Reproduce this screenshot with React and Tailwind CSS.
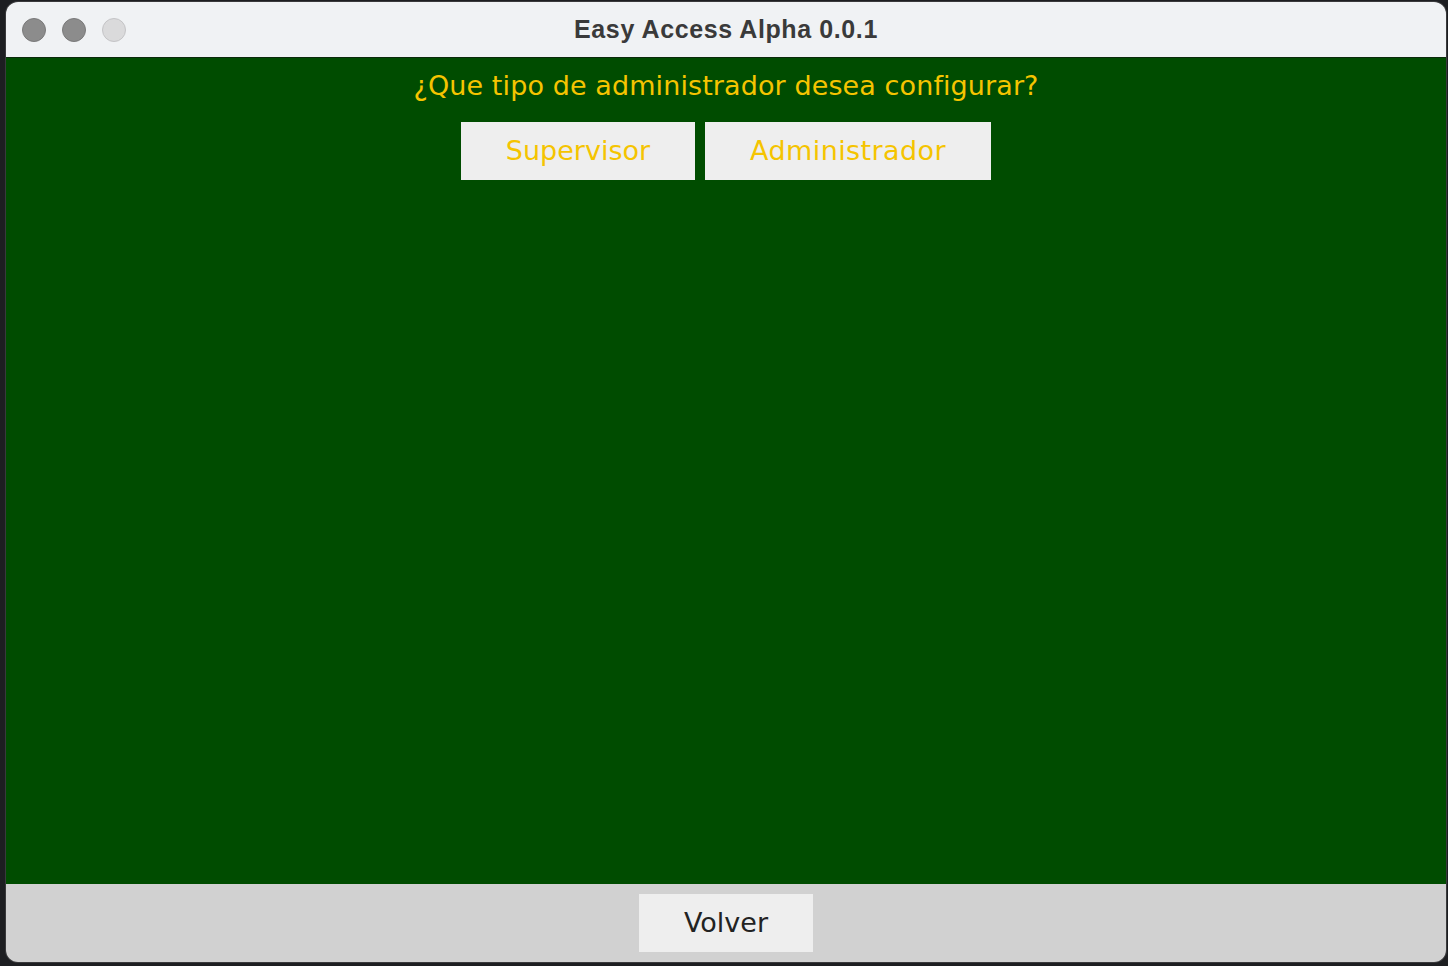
export default function App() {
  return (
    <div className="w-[1448px] h-[966px] bg-[#1d1e21] pt-[2px] pl-[6px] pr-[2px] pb-[4px] overflow-hidden">
      <div className="w-[1440px] h-[960px] rounded-[12px] overflow-hidden flex flex-col shadow-[0_0_0_1px_#3a3a3c]">
        {/* title bar */}
        <div className="h-[56px] shrink-0 bg-[#f0f2f4] relative flex items-center justify-center border-b border-[#0b2a0b]">
          <div className="absolute left-[16px] top-[16px] flex gap-[16px]">
            <span className="w-[24px] h-[24px] rounded-full bg-[#8c8c8c] border border-[#7a7a7a]" />
            <span className="w-[24px] h-[24px] rounded-full bg-[#8c8c8c] border border-[#7a7a7a]" />
            <span className="w-[24px] h-[24px] rounded-full bg-[#dadadb] border border-[#c4c4c6]" />
          </div>
          <span className="text-[#3a3a3a] text-[25px] font-bold tracking-[0.6px] [font-family:'Liberation_Sans',Arial,sans-serif]">
            Easy Access Alpha 0.0.1
          </span>
        </div>

        {/* content */}
        <div className="flex-1 bg-[#004c00] flex flex-col items-center pt-[12px] [font-family:'DejaVu_Sans',sans-serif]">
          <p className="text-[#f5c400] text-[27px] leading-[32px] tracking-[0.1px]">¿Que tipo de administrador desea configurar?</p>
          <div className="flex gap-[10px] mt-[20px]">
            <button className="w-[234px] h-[58px] bg-[#eeeeee] text-[#f5c400] text-[27px]">Supervisor</button>
            <button className="w-[286px] h-[58px] bg-[#eeeeee] text-[#f5c400] text-[27px] tracking-[0.4px]">Administrador</button>
          </div>
        </div>

        {/* bottom bar */}
        <div className="h-[78px] shrink-0 bg-[#d1d1d1] flex justify-center pt-[10px] [font-family:'DejaVu_Sans',sans-serif]">
          <button className="w-[174px] h-[58px] bg-[#eeeeee] text-[#222222] text-[27px]">Volver</button>
        </div>
      </div>
    </div>
  );
}
